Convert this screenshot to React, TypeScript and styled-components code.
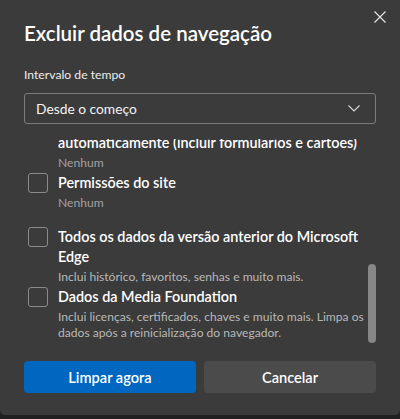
import React, { useLayoutEffect, useRef } from "react";
import styled, { createGlobalStyle } from "styled-components";

const GlobalStyle = createGlobalStyle`
  * { box-sizing: border-box; }
  body {
    margin: 0;
    background: #202020;
    font-family: Lato, "Noto Sans", sans-serif;
    color: #ffffff;
  }
`;

const Dialog = styled.div`
  position: relative;
  width: 400px;
  height: 415px;
  padding: 19px 24px 22px;
  background: #3b3b3b;
  border-radius: 0 0 5px 5px;
  display: flex;
  flex-direction: column;
`;

const CloseButton = styled.button`
  position: absolute;
  top: 11px;
  right: 14px;
  width: 12px;
  height: 12px;
  padding: 0;
  border: none;
  background: none;
  display: flex;
  cursor: pointer;
`;

const Title = styled.h1`
  margin: 0;
  font-size: 20.5px;
  line-height: 28px;
  font-weight: 600;
`;

const FieldLabel = styled.div`
  margin-top: 20px;
  font-size: 12.2px;
  line-height: 16px;
  color: #ececec;
`;

const Select = styled.div`
  margin-top: 10px;
  height: 31px;
  padding: 0 15px 0 11px;
  border: 1px solid #7c7c7c;
  border-radius: 3px;
  display: flex;
  align-items: center;
  justify-content: space-between;
  font-size: 13.8px;
  color: #f4f4f4;
`;

const ScrollArea = styled.div`
  margin-top: 15px;
  height: 207px;
  display: flex;
  gap: 3px;
`;

const ScrollViewport = styled.div`
  flex: 1;
  overflow: hidden;
  padding-bottom: 5px;
  display: flex;
  flex-direction: column;
`;

const ScrollTrack = styled.div`
  width: 8px;
  display: flex;
  flex-direction: column;
`;

const ScrollThumb = styled.div<{ $offset: number; $size: number }>`
  margin-top: ${(p) => p.$offset}px;
  height: ${(p) => p.$size}px;
  border-radius: 4px;
  background: #878787;
`;

const Item = styled.label<{ $spaced?: boolean }>`
  display: flex;
  gap: 10px;
  padding-left: 4px;
  margin-bottom: ${(p) => (p.$spaced ? 14 : 0)}px;
  flex-shrink: 0;
  cursor: pointer;
`;

const Checkbox = styled.span`
  flex-shrink: 0;
  width: 20px;
  height: 20px;
  margin-top: 2px;
  border: 1px solid #8a8a8a;
  border-radius: 3px;
`;

const ItemText = styled.div`
  flex: 1;
  min-width: 0;
  padding-top: 2px;
`;

const ItemTitle = styled.div`
  font-size: 14.4px;
  line-height: 20px;
  font-weight: 600;
`;

const ItemDesc = styled.div<{ $muted?: boolean }>`
  padding-top: 2px;
  font-size: 12.1px;
  line-height: 16px;
  color: ${(p) => (p.$muted ? "#a2a2a2" : "#b8b8b8")};
`;

const Actions = styled.div`
  margin-top: 15px;
  display: grid;
  grid-template-columns: 1fr 1fr;
  gap: 8px;
`;

const Button = styled.button<{ $primary?: boolean }>`
  height: 32px;
  border: none;
  border-radius: 4px;
  background: ${(p) => (p.$primary ? "#0067c0" : "#4b4b4b")};
  color: #ffffff;
  font-family: inherit;
  font-size: 14.6px;
  font-weight: 600;
  cursor: pointer;
`;

interface DataItem {
  title: React.ReactNode;
  desc: string;
  muted?: boolean;
  spaced?: boolean;
}

const items: DataItem[] = [
  {
    title: (
      <>
        Dados de preenchimento de formulários
        <br />
        automaticamente (incluir formulários e cartões)
      </>
    ),
    desc: "Nenhum",
    muted: true,
  },
  { title: "Permissões do site", desc: "Nenhum", muted: true, spaced: true },
  {
    title: "Todos os dados da versão anterior do Microsoft Edge",
    desc: "Inclui histórico, favoritos, senhas e muito mais.",
  },
  {
    title: "Dados da Media Foundation",
    desc: "Inclui licenças, certificados, chaves e muito mais. Limpa os dados após a reinicialização do navegador.",
  },
];

export default function App() {
  const viewportRef = useRef<HTMLDivElement>(null);

  // the list is shown scrolled all the way down
  useLayoutEffect(() => {
    const el = viewportRef.current;
    if (el) el.scrollTop = el.scrollHeight;
  }, []);

  return (
    <>
      <GlobalStyle />
      <Dialog>
        <CloseButton aria-label="Fechar">
          <svg width="12" height="12" viewBox="0 0 12 12">
            <path d="M0.5 0.5 L11.5 11.5 M11.5 0.5 L0.5 11.5" stroke="#e8e8e8" strokeWidth="1.1" />
          </svg>
        </CloseButton>
        <Title>Excluir dados de navegação</Title>
        <FieldLabel>Intervalo de tempo</FieldLabel>
        <Select>
          <span>Desde o começo</span>
          <svg width="12" height="7" viewBox="0 0 12 7">
            <path d="M0.5 0.5 L6 6 L11.5 0.5" fill="none" stroke="#d8d8d8" strokeWidth="1.1" />
          </svg>
        </Select>
        <ScrollArea>
          <ScrollViewport ref={viewportRef}>
            {items.map((item, i) => (
              <Item key={i} $spaced={item.spaced}>
                <Checkbox />
                <ItemText>
                  <ItemTitle>{item.title}</ItemTitle>
                  <ItemDesc $muted={item.muted}>{item.desc}</ItemDesc>
                </ItemText>
              </Item>
            ))}
          </ScrollViewport>
          <ScrollTrack>
            <ScrollThumb $offset={125} $size={79} />
          </ScrollTrack>
        </ScrollArea>
        <Actions>
          <Button $primary>Limpar agora</Button>
          <Button>Cancelar</Button>
        </Actions>
      </Dialog>
    </>
  );
}
